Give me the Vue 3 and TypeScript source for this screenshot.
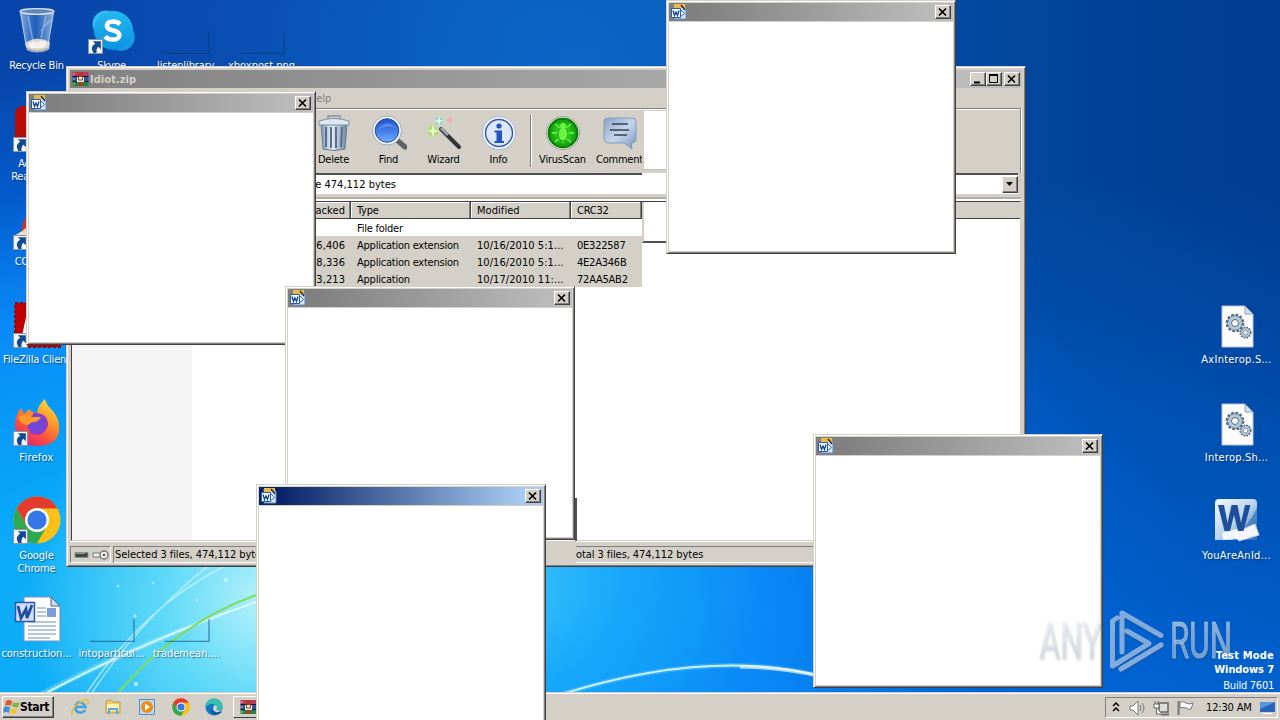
<script setup lang="ts">
interface Popup { x: number; y: number; active?: boolean }
interface Shortcut { label: string[]; icon: string; x: number; y: number; link?: boolean; track?: number }

const popups: Popup[] = [
  { x: 26, y: 91 },
  { x: 666, y: 0 },
  { x: 285, y: 286 },
  { x: 813, y: 434 },
  { x: 256, y: 484, active: true },
]

const shortcuts: Shortcut[] = [
  { label: ['Recycle Bin'], icon: 'bin', x: -1, y: 6 },
  { label: ['Skype'], icon: 'skype', x: 74, y: 6, link: true },
  { label: ['listenlibrary.'], icon: 'ghost', x: 149, y: 6, track: -0.1 },
  { label: ['xboxpost.png'], icon: 'ghost', x: 224, y: 6, track: 0 },
  { label: ['Acrobat', 'Reader DC'], icon: 'acrobat', x: -1, y: 104, link: true },
  { label: ['CCleaner'], icon: 'cc', x: -1, y: 202, link: true },
  { label: ['FileZilla Client'], icon: 'filezilla', x: -1, y: 300, link: true, track: -0.15 },
  { label: ['Firefox'], icon: 'firefox', x: -1, y: 398, link: true, track: 0.25 },
  { label: ['Google', 'Chrome'], icon: 'chrome', x: -1, y: 496, link: true, track: -0.1 },
  { label: ['construction...'], icon: 'doc', x: -1, y: 594, track: -0.05 },
  { label: ['intoparticul...'], icon: 'ghost', x: 74, y: 594, track: 0 },
  { label: ['trademean....'], icon: 'ghost', x: 149, y: 594, track: 0 },
  { label: ['AxInterop.S...'], icon: 'dll', x: 1199, y: 300, track: 0.25 },
  { label: ['Interop.Sh...'], icon: 'dll', x: 1199, y: 398, track: 0.22 },
  { label: ['YouAreAnId...'], icon: 'word', x: 1199, y: 496, track: 0.28 },
]

const tools = [
  { name: 'Delete', icon: 'trash' },
  { name: 'Find', icon: 'find' },
  { name: 'Wizard', icon: 'wizard' },
  { name: 'Info', icon: 'info' },
]
const tools2 = [
  { name: 'VirusScan', icon: 'virus' },
  { name: 'Comment', icon: 'comment' },
]
const columns = ['Name', 'Size', 'Packed', 'Type', 'Modified', 'CRC32']
const rows = [
  ['', '', '', 'File folder', '', ''],
  ['', '', '46,406', 'Application extension', '10/16/2010 5:1...', '0E322587'],
  ['', '', '18,336', 'Application extension', '10/16/2010 5:1...', '4E2A346B'],
  ['', '', '23,213', 'Application', '10/17/2010 11:...', '72AA5AB2'],
]
const quick = ['ie', 'folder', 'media', 'chrome', 'edge']
</script>

<template>
  <svg class="defs" width="0" height="0">
    <defs>
      <linearGradient id="gGlass" x1="0" x2="1"><stop offset="0" stop-color="#b9d3ee" stop-opacity=".75" /><stop offset=".45" stop-color="#3f7fd0" stop-opacity=".45" /><stop offset="1" stop-color="#cfe0f2" stop-opacity=".7" /></linearGradient>
      <linearGradient id="gSkype" x1="0" y1="0" x2="0" y2="1"><stop offset="0" stop-color="#25b8ee" /><stop offset="1" stop-color="#0a93e2" /></linearGradient>
      <linearGradient id="gFox" x1=".9" y1="0" x2=".3" y2="1"><stop offset="0" stop-color="#ffe84a" /><stop offset=".4" stop-color="#ff9a28" /><stop offset=".75" stop-color="#fb4a43" /><stop offset="1" stop-color="#e02478" /></linearGradient>
      <linearGradient id="gMetal" x1="0" x2="1"><stop offset="0" stop-color="#7d93ab" /><stop offset=".4" stop-color="#e8f0f7" /><stop offset="1" stop-color="#6f849c" /></linearGradient>
      <linearGradient id="gBlue" x1="0" y1="0" x2="0" y2="1"><stop offset="0" stop-color="#2352cc" /><stop offset=".5" stop-color="#3f7bea" /><stop offset="1" stop-color="#6fb0ff" /></linearGradient>
      <linearGradient id="gNote" x1="0" y1="0" x2="1" y2="1"><stop offset="0" stop-color="#8ba3c6" /><stop offset=".5" stop-color="#c5d6ec" /><stop offset="1" stop-color="#7993bd" /></linearGradient>
      <linearGradient id="gWord" x1="0" y1="0" x2="1" y2="1"><stop offset="0" stop-color="#f5f9ff" /><stop offset=".5" stop-color="#bdd5ee" /><stop offset="1" stop-color="#3979bd" /></linearGradient>
      <radialGradient id="gVirus"><stop offset="0" stop-color="#4cf02e" /><stop offset="1" stop-color="#0b930c" /></radialGradient>
      <linearGradient id="gMark" x1="0" y1="0" x2="0" y2="1"><stop offset="0" stop-color="#fff" stop-opacity=".6" /><stop offset=".4" stop-color="#e8edf5" stop-opacity=".52" /><stop offset="1" stop-color="#b9c0cd" stop-opacity=".55" /></linearGradient>
    </defs>

    <symbol id="bin" viewBox="0 0 48 48">
      <path d="M7 5l6 37q11 6 22-1l6-36z" fill="url(#gGlass)" />
      <path d="M12 37q12-8 25-1l-1 7q-11 6-22 0z" fill="#d9d5d1" />
      <path d="M15 39q5-6 9-2 5-5 10 0l-3 5H18z" fill="#f5f2ee" />
      <path d="M15 10l5 25M33 10l-5 22M28 25l9-11" stroke="#d2e4fa" stroke-opacity=".45" stroke-width="1.500" fill="none" />
      <ellipse cx="24" cy="5.500" rx="17" ry="2.800" fill="#6f90b8" fill-opacity=".8" stroke="#dfe6ec" stroke-width="1.300" />
      <path d="M7.500 7l6 34M40.500 7l-6 35" stroke="#d5e4f5" fill="none" stroke-opacity=".7" />
      <path d="M14 43q10 5 21 0" stroke="#a9aeb3" stroke-width="2" fill="none" />
    </symbol>
    <symbol id="skype" viewBox="0 0 48 48">
      <circle cx="18" cy="18" r="13.500" fill="#2fbdf0" /><circle cx="33" cy="31" r="13.800" fill="#159ce5" /><circle cx="25.500" cy="24.500" r="19.500" fill="url(#gSkype)" />
      <path d="M32 18.200q-3-2.700-7-2.700c-8 0-8 7.300-.5 8.700 9.500 1.700 8.500 9.300.5 9.300-4 0-6.500-1.300-8-3" fill="none" stroke="#fff" stroke-width="4.600" />
    </symbol>
    <symbol id="ghost" viewBox="0 0 48 48"><path d="M2 47.500h44V25" fill="none" stroke="#063c7a" stroke-opacity=".55" stroke-width="1.300" /></symbol>
    <symbol id="acrobat" viewBox="0 0 48 48"><rect x="2" y="2" width="46" height="46" rx="8" fill="#b80d05" /><path d="M10 37q17-9 14-24M24 15q3 16 16 15M10 37q12-10 30-7" fill="none" stroke="#fff" stroke-width="3" /></symbol>
    <symbol id="cc" viewBox="0 0 48 48"><path d="M9 35Q7 13 24 7l20 35H20z" fill="#d4342c" /><path d="M1 34Q10 29 17 23l24 19H4z" fill="#f3dfc2" /></symbol>
    <symbol id="filezilla" viewBox="0 0 48 48"><rect x="2" y="3" width="46" height="44" fill="#bf0000" stroke="#8c0c12" stroke-width="2" stroke-dasharray="3 2" /><path d="M15 8h28l-2 6H23l-2 9h14l-2 6H19l-5 16H7z" fill="#fff" /></symbol>
    <symbol id="firefox" viewBox="0 0 48 48">
      <path d="M2 28Q2 17 8 10l3 6 5-5q3 4 8 4 1-8 8-14 1 6 8 12 6 8 6 15 2 19-22 20Q4 48 2 28z" fill="url(#gFox)" />
      <circle cx="24" cy="26" r="10" fill="#7446d5" /><path d="M5 19q8-5 14 0h9q-3 6-9 5l-4 3Q8 27 5 19z" fill="#ff9a28" /><path d="M20 16q14-1 14 11-4 13-17 7" fill="none" stroke="#9a35c8" stroke-width="2" />
    </symbol>
    <symbol id="chrome" viewBox="0 0 48 48">
      <circle cx="24" cy="24" r="23.500" fill="#fbc116" />
      <path d="M3.700 12.300A23.500 23.500 0 0 0 24 47.500L34 30 24 24 14 30z" fill="#2da94f" />
      <path d="M3.700 12.300A23.500 23.500 0 0 1 44.500 12.500H24L14 30z" fill="#e33b2e" />
      <circle cx="24" cy="24" r="12" fill="#fff" /><circle cx="24" cy="24" r="9.600" fill="#3478e8" />
    </symbol>
    <symbol id="doc" viewBox="0 0 48 48">
      <path d="M11 3h27l9 9v35H11z" fill="#fdfeff" stroke="#7891b5" /><path d="M38 3v9h9z" fill="#cfdcef" stroke="#47628c" />
      <path d="M24 14h9M24 18h9M24 22h9M15 28h28M15 32h28M15 36h28M15 40h28M15 44h22" stroke="#6f91c6" stroke-width="1.200" /><rect x="34" y="14" width="9" height="9" fill="#7ca0d6" />
      <rect x="2.500" y="8.500" width="19" height="19" fill="#cfe0f7" stroke="#3257a5" stroke-width="1.500" /><path d="M5 12l3 12 5-9 1 9 5-13" fill="none" stroke="#214d9f" stroke-width="2.800" />
    </symbol>
    <symbol id="gear" viewBox="0 0 24 24">
      <circle cx="12" cy="12" r="9.500" fill="none" stroke="#4e6375" stroke-width="3.400" stroke-dasharray="3 2" />
      <circle cx="12" cy="12" r="6.800" fill="none" stroke="#b4c8da" stroke-width="4.500" /><circle cx="12" cy="12" r="4.200" fill="#fff" stroke="#4d6579" stroke-width="1.200" /><circle cx="12" cy="12" r="8.800" fill="none" stroke="#5d7488" />
    </symbol>
    <symbol id="dll" viewBox="0 0 48 48">
      <path d="M9 6h23l8 8v33H9z" fill="#fcfcfc" stroke="#b8c3cf" /><path d="M32 6v8h8z" fill="#d6e0eb" stroke="#93a4b5" />
      <use href="#gear" x="12" y="13" width="20" height="20" /><use href="#gear" x="26" y="26" width="13" height="13" />
    </symbol>
    <symbol id="word" viewBox="0 0 48 48">
      <path d="M2 7q0-4 4-4h34q4 0 4 4v37H2z" fill="url(#gWord)" /><path d="M20 42q14-10 24-30v32H20z" fill="#2e6db5" fill-opacity=".65" />
      <path d="M20 37l22-9 4 11-20 6z" fill="#f5f6fb" stroke="#c3c9d9" /><path d="M9 37l18-5-2 11-15 1z" fill="#fff" fill-opacity=".85" />
      <path d="M5 9h6l3.500 18L18.500 9h6l3.500 18L32 9h5.500l-7 26h-5.500l-4-16-4 16h-5.500z" fill="#1d4f9c" />
    </symbol>
    <symbol id="link" viewBox="0 0 14 14"><path d="M.5.500h13v13H.5z" fill="#f4f8fc" stroke="#8d959d" /><path d="M12 2v7.500L9.700 7.300Q7.500 9 8 13H5Q1.500 8 6.700 4.300L4.500 2z" fill="#124a90" /></symbol>

    <symbol id="trash" viewBox="0 0 36 36"><path d="M5 9h26l-2 25q-11 3-22 0z" fill="url(#gMetal)" stroke="#647b94" /><path d="M10 12v20M15 12v21M20 12v21M26 12l-1 20" stroke="#56708f" stroke-width="2" /><path d="M3 6q15-5 30 0v4H3z" fill="#dfe7ef" stroke="#798da4" /><path d="M12 4V1h12v3" fill="none" stroke="#8193a7" stroke-width="1.500" /></symbol>
    <symbol id="find" viewBox="0 0 36 36"><path d="M26 25l8 7" stroke="#5c6269" stroke-width="5" stroke-linecap="round" /><circle cx="16" cy="15.500" r="14.500" fill="#f4f7fb" stroke="#9eaab8" /><circle cx="16" cy="15.500" r="11.800" fill="url(#gBlue)" stroke="#24459e" /><path d="M7 14q9-11 18-1-9-3-18 1" fill="#92b7ff" fill-opacity=".4" /></symbol>
    <symbol id="wizard" viewBox="0 0 36 36"><path d="M15 14l18 18" stroke="#30343a" stroke-width="4" stroke-linecap="round" /><path d="M15 13l7 7" stroke="#9ba1a8" stroke-width="3" /><circle cx="13" cy="6" r="4" fill="#61dcea" fill-opacity=".65" /><circle cx="7" cy="16" r="5.500" fill="#9be552" fill-opacity=".65" /><path d="M13 1l1 4 4 1-4 1-1 4-1-4-4-1 4-1zM7 10l1.500 5 5 1-5 1L7 22l-1.500-5-5-1 5-1z" fill="#eeffcb" /><circle cx="24" cy="5" r="2.500" fill="#ffa0a8" fill-opacity=".7" /></symbol>
    <symbol id="info" viewBox="0 0 36 36"><circle cx="18" cy="18" r="16.500" fill="#f4f7fc" stroke="#b0b9ca" /><circle cx="18" cy="18" r="13.500" fill="#dde8fb" stroke="#3658b5" stroke-width="1.500" /><circle cx="18" cy="11" r="2.600" fill="#2454bf" /><path d="M13.500 15.500H21V26h2v2H13.500v-2h2v-8.500h-2z" fill="#2454bf" /></symbol>
    <symbol id="virus" viewBox="0 0 36 36"><circle cx="18" cy="18" r="16.500" fill="#eef4eb" stroke="#8da587" /><circle cx="18" cy="18" r="14.600" fill="url(#gVirus)" stroke="#087009" stroke-width="1.500" /><path d="M10 9l5 4M26 9l-5 4M7 18h7M29 18h-7M10 27l5-4M26 27l-5-4M18 8v20" stroke="#5fe83c" stroke-width="1.800" /><ellipse cx="18" cy="19" rx="5" ry="7" fill="#6bf442" stroke="#0c9c0e" /><circle cx="18" cy="11" r="3" fill="#6bf442" /></symbol>
    <symbol id="comment" viewBox="0 0 36 36"><path d="M6 3h24q4 0 4 4v17q0 4-4 4h-1l1 6-8-6H7q-5 0-5-5V7q0-4 4-4z" fill="url(#gNote)" stroke="#819abb" /><path d="M10 9h16M8 15h19M12 20h13" stroke="#36404e" stroke-width="1.600" /></symbol>
    <symbol id="rar" viewBox="0 0 16 16"><path d="M0 1h16v5H0z" fill="#b63863" /><path d="M0 6h16v4H0z" fill="#314fa5" /><path d="M0 10h16v5H0z" fill="#218446" /><path d="M0 5.500h16M0 10.500h16" stroke="#161a22" /><path d="M6 1h4v14H6z" fill="#ae3b21" /><path d="M4.500 6h7v5h-7z" fill="#ece9df" /><path d="M6 6v3h4V6" fill="none" stroke="#7c4c2d" /><path d="M1.500 2v2M1.500 7v2M1.500 12v2" stroke="#e3ca7d" /></symbol>
    <symbol id="wicon" viewBox="0 0 16 16"><path d="M3 1h10l2 3v11H3z" fill="#d7e6fb" stroke="#6383b7" /><path d="M3 0h11v4H3z" fill="#e8bc4b" /><path d="M10 1l4 5" stroke="#202b3e" stroke-width="1.500" /><path d="M9 5l4.500 4.500L9 13z" fill="#fff" stroke="#2861bb" /><path d="M.5 4.500h9v9h-9z" fill="#fff" stroke="#255bb3" /><path d="M2 6.500l1.500 5L5 8l1.500 3.500L8 6.500" fill="none" stroke="#174c9d" stroke-width="1.400" /></symbol>

    <symbol id="ie" viewBox="0 0 18 18"><path d="M14.500 12Q11 16 6.500 14 2 10 6 5.500q5-3.500 8.500 3.500H5" fill="none" stroke="#3ba5e0" stroke-width="2.500" /><path d="M2 16Q-2 14 7 6q9-7 10-3 1 2-1 4" fill="none" stroke="#e9b92f" stroke-width="1.500" /></symbol>
    <symbol id="folder" viewBox="0 0 18 18"><path d="M2 3l5-1 2 2h7v11H2z" fill="#edc969" stroke="#bf9d42" /><path d="M3 6h12v7H3z" fill="#fff0b4" /><path d="M5 16v-5h8v5" fill="none" stroke="#58abe0" stroke-width="2" /></symbol>
    <symbol id="media" viewBox="0 0 18 18"><path d="M1.500 1.500h15v15h-15z" fill="#b8daf4" stroke="#4b91ca" /><circle cx="9" cy="9" r="6" fill="#f28b16" /><path d="M7 5.500l5 3.500-5 3.500z" fill="#fff" /></symbol>
    <symbol id="edge" viewBox="0 0 18 18"><circle cx="9" cy="9" r="8.500" fill="#0f76c4" /><path d="M1 9Q1 1 9 .5q9 1 8.500 8-1 4-5 3.500-3-1-1-4-5-5-10.500 1z" fill="#35c1b1" /><path d="M8 8q-3 3 1 6 4 2 7-1l1 1q-3 3-7 3-7-3-2-9z" fill="#0c529f" /><path d="M9 7q5 1 2 4 3 3 6 0l-1 2q-6 3-8-2z" fill="#d8d4cd" /></symbol>
    <symbol id="flagwin" viewBox="0 0 18 18"><path d="M3 3q3-2 6 0L8 8Q5 6 2 8z" fill="#e3552a" /><path d="M10 4q3 2 7 0l-2 5q-3 1-6-1z" fill="#7fb93b" /><path d="M1 9q3-1 6 0l-1 6q-3-2-6 0z" fill="#3e8fdb" /><path d="M8 10q3 2 6 0l-1 5q-3 2-6 0z" fill="#f6c231" /></symbol>
  </svg>

  <main class="screen">
    <svg class="streaks" width="1280" height="720" fill="none">
      <path d="M42 694Q145 640 262 600" stroke="#9beafb" stroke-width="6" stroke-opacity=".35" />
      <path d="M44 694Q145 640 262 600" stroke="#e3fbff" stroke-width="2.200" stroke-opacity=".85" />
      <path d="M86 694Q145 605 225 566M91 694Q140 620 208 566" stroke="#d7f8ff" stroke-width="1.500" stroke-opacity=".65" />
      <path d="M117 694Q180 620 262 593" stroke="#7ddc63" stroke-width="2.200" />
      <path d="M562 694Q710 648 820 676" stroke="#76d0ff" stroke-width="5" stroke-opacity=".35" />
      <path d="M562 694Q710 648 820 676" stroke="#c9f1ff" stroke-width="2" />
      <path d="M740 667Q780 667 820 676" stroke="#fff" stroke-width="3.500" stroke-opacity=".6" />
      <g fill="#dcfaff" fill-opacity=".75"><circle cx="135" cy="616" r="1.500" /><circle cx="226" cy="580" r="2" /><circle cx="153" cy="583" r="1" /><circle cx="136" cy="684" r="2" /><circle cx="118" cy="586" r="1.200" /><circle cx="197" cy="600" r="1.200" /></g>
    </svg>

    <div v-for="s in shortcuts" :key="s.label[0]" class="shortcut" :style="{ left: s.x + 'px', top: s.y + 'px', letterSpacing: (s.track ?? -0.23) + 'px' }">
      <span class="pic">
        <svg width="48" height="48"><use :href="'#' + s.icon" /></svg>
        <svg v-if="s.link" class="arrow" width="15" height="15"><use href="#link" /></svg>
      </span>
      <span v-for="l in s.label" :key="l" class="caption">{{ l }}</span>
    </div>

    <section class="archive">
      <header class="title">
        <svg width="17" height="16"><use href="#rar" /></svg><b>Idiot.zip</b>
        <span class="btn"><svg width="12" height="10"><path d="M2 8.500h6" stroke="#000" stroke-width="2" /></svg></span>
        <span class="btn"><svg width="12" height="10"><path d="M1.500 .5h8v8h-8zM1.500 1.500h8" fill="none" stroke="#000" /></svg></span>
        <span class="btn last"><svg width="12" height="10"><path d="M2 1.500l7 7M9 1.500l-7 7" stroke="#000" stroke-width="1.700" /></svg></span>
      </header>
      <nav class="menu">Help</nav>
      <div class="toolbar">
        <div v-for="t in tools" :key="t.name" class="tool"><svg width="36" height="36"><use :href="'#' + t.icon" /></svg><span>{{ t.name }}</span></div>
        <i class="sep"></i>
        <div v-for="t in tools2" :key="t.name" class="tool wide"><svg width="36" height="36"><use :href="'#' + t.icon" /></svg><span>{{ t.name }}</span></div>
      </div>
      <div class="address"><span class="path">size 474,112 bytes</span><span class="btn drop"><svg width="8" height="5"><path d="M0 0h7L3.500 4z" /></svg></span></div>
      <div class="list">
        <div class="row head"><span v-for="c in columns" :key="c">{{ c }}</span></div>
        <div v-for="(r, i) in rows" :key="i" class="row" :class="{ picked: i > 0 }"><span v-for="(c, j) in r" :key="j">{{ c }}</span></div>
        <div class="rest"></div>
      </div>
      <footer class="status">
        <span class="cell lamps"><svg width="36" height="12"><path d="M2 3.500h13v5H2z" fill="#3f4646" stroke="#8c918c" /><path d="M3 4.500h9" stroke="#8d9b95" /><path d="M20 4h8v4h-8z" fill="#f0f0ec" stroke="#777" /><circle cx="31" cy="6" r="4" fill="#f3f3ef" stroke="#777" stroke-width="1.500" /><circle cx="31" cy="6" r="1.300" fill="#555" /></svg></span>
        <span class="cell sel">Selected 3 files, 474,112 bytes</span>
        <span class="cell total">otal 3 files, 474,112 bytes</span>
      </footer>
    </section>
    <div class="trail upper"></div>
    <div class="trail gap"></div>
    <div class="trail lower"></div>
    <div class="trail side"></div>

    <footer class="taskbar">
      <div class="start"><svg width="18" height="18"><use href="#flagwin" /></svg><b>Start</b></div>
      <div class="quick"><svg v-for="q in quick" :key="q" width="18" height="18"><use :href="'#' + q" /></svg></div>
      <div class="task"><svg width="17" height="16"><use href="#rar" /></svg></div>
      <div class="tray">
        <svg width="82" height="18" fill="none">
          <path d="M1 7l3-3 3 3M1 12l3-3 3 3" stroke="#000" stroke-width="1.500" />
          <path d="M18 7h3l5-5v14l-5-5h-3z" fill="#fff" stroke="#777" /><path d="M28 6q2 3 0 6M30 4q4 5 0 10" stroke="#777" />
          <path d="M47 4h9v9h-9z" fill="#dcdcd8" stroke="#666" stroke-width="1.500" /><path d="M49 15.500h8" stroke="#777" stroke-width="2" /><path d="M42 5h5v4h-5zM43 2v3M46 2v3M44.500 9v6H49" fill="#fff" stroke="#666" />
          <path d="M66.500 2v14" stroke="#777" stroke-width="2" /><path d="M68 3q4-1 6 1 3 2 7 0l-2 6q-3 1-5-1-3-1-6 0z" fill="#fff" stroke="#777" />
        </svg>
        <time>12:30 AM</time>
        <svg width="16" height="14"><path d="M0 1h15v10H0z" fill="#2b63b8" /><path d="M0 1h15L0 8z" fill="#5a94dc" /><path d="M3 12.500h9" stroke="#fff" /></svg>
      </div>
    </footer>

    <section v-for="p in popups" :key="p.x" class="popup" :class="{ active: p.active }" :style="{ left: p.x + 'px', top: p.y + 'px' }">
      <header><svg width="16" height="16"><use href="#wicon" /></svg><span class="btn"><svg width="12" height="10"><path d="M2 1.500l7 7M9 1.500l-7 7" stroke="#000" stroke-width="1.700" /></svg></span></header>
      <div class="blank"></div>
    </section>

    <svg class="mark" width="250" height="100">
      <g fill="url(#gMark)" stroke="#dfe6f0" stroke-opacity=".4"><text x="10" y="58" textLength="62" lengthAdjust="spacingAndGlyphs">ANY</text><text x="141" y="58" textLength="62" lengthAdjust="spacingAndGlyphs">RUN</text></g>
      <path d="M88 18L83.500 21V66L120 43.500 98 31M93 52V13L132 35.500 M92 69L132 45" fill="none" stroke="#e6edf6" stroke-opacity=".55" stroke-width="5" stroke-linecap="round" stroke-linejoin="round" />
    </svg>
    <div class="build"><b>Test Mode</b><b>Windows 7</b><span>Build 7601</span></div>
  </main>
</template>

<style>
html, body { margin: 0; overflow: hidden; }
</style>

<style scoped>
* { box-sizing: border-box; }
.defs { position: absolute; }
.screen {
  position: relative; width: 1280px; height: 720px; overflow: hidden;
  font: 11px/13px "DejaVu Sans Condensed", "DejaVu Sans", sans-serif; font-stretch: condensed; letter-spacing: -0.23px; color: #000; cursor: default;
  background:
    radial-gradient(ellipse 230px 250px at 260px 600px, #b4f1fa 0, rgba(110, 224, 248, .85) 40%, rgba(30, 190, 248, 0) 100%),
    radial-gradient(ellipse 260px 220px at 500px 580px, rgba(70, 206, 252, .8) 0, rgba(40, 180, 252, .45) 50%, rgba(30, 160, 250, 0) 100%),
    radial-gradient(ellipse 1000px 560px at 200px 620px, #1cbcf8 0, #08a6f8 28%, #0a8af8 56%, rgba(0, 102, 220, .65) 78%, rgba(0, 90, 200, 0) 100%),
    radial-gradient(ellipse 380px 300px at 580px 60px, rgba(12, 106, 200, .85) 0, rgba(14, 111, 204, 0) 100%),
    linear-gradient(0deg, rgba(0, 112, 232, .75) 0, rgba(0, 90, 200, 0) 75%),
    linear-gradient(90deg, #0845aa 0, #0a55b6 40%, #0049a0 75%, #003c90 100%);
}
.screen svg { display: block; flex: none; }
.streaks { position: absolute; inset: 0; }
.shortcut { position: absolute; width: 75px; display: flex; flex-direction: column; align-items: center; color: #fff; }
.shortcut .pic { position: relative; margin-bottom: 5px; }
.shortcut .arrow { position: absolute; left: 0; bottom: 0; }
.caption { white-space: nowrap; text-shadow: 1px 1px 1px rgba(0, 30, 80, .6); }

.btn { width: 16px; height: 14px; display: flex; align-items: center; justify-content: center; background: #d4d0c8; border: 1px solid; border-color: #fff #404040 #404040 #fff; box-shadow: inset -1px -1px #808080; }

.archive { position: absolute; left: 66px; top: 66px; width: 960px; height: 501px; padding: 3px; display: flex; flex-direction: column; background: #d4d0c8; border: 1px solid; border-color: #d4d0c8 #404040 #404040 #d4d0c8; box-shadow: inset 1px 1px #fff, inset -1px -1px #808080; }
.title { height: 18px; flex: none; display: flex; align-items: center; padding: 0 2px; background: linear-gradient(90deg, #808080, #c0c0c0); color: #d4d0c8; }
.title b { flex: 1; margin-left: 1px; letter-spacing: .05px; }
.title .last { margin-left: 2px; }
.menu { height: 20px; flex: none; padding: 4px 0 0 239px; color: #808080; letter-spacing: -.1px; }
.toolbar { height: 65px; flex: none; margin-right: 1px; border: 1px solid #808080; border-left: 0; border-bottom: 0; box-shadow: inset 0 1px #fff, 1px 0 #fff; display: flex; padding: 6px 0 0 236px; }
.tool { width: 55px; display: flex; flex-direction: column; align-items: center; }
.tool span { margin-top: 2px; }
.tool.wide { width: 57px; }
.sep { width: 2px; height: 52px; margin: 0 2px 0 4px; background: #808080; border-right: 1px solid #fff; }
.address { height: 21px; flex: none; margin: 0 4px 0 1px; display: flex; justify-content: space-between; align-items: center; background: #fff; border-top: 2px solid #505050; }
.path { padding-left: 231px; letter-spacing: .02px; }
.drop { height: 17px; }
.list { position: relative; flex: 1; min-height: 0; margin: 7px 1px 0 1px; border: 1px solid #404040; border-right-color: #d4d0c8; border-bottom-color: #d4d0c8; box-shadow: 0 -2px #fff, 0 -4px #b4b0a8; background: #fff; display: flex; flex-direction: column; }
.row { flex: none; width: 570px; height: 17px; display: grid; grid-template-columns: 120px 80px 79px 120px 100px 71px; line-height: 19px; }
.row span { padding: 0 6px; white-space: nowrap; overflow: hidden; }
.row span:nth-child(2), .row span:nth-child(3) { text-align: right; }
.row span:nth-child(3), .row span:nth-child(5) { letter-spacing: .06px; }
.row.head { width: auto; height: 17px; background: #d4d0c8; border-bottom: 1px solid #404040; }
.row.head span { border-right: 1px solid #404040; box-shadow: inset -1px 0 #808080, inset 1px 1px #fff; padding: 0 5px 0 6px; line-height: 18px; }
.picked { background: #d4d0c8; }
.rest { flex: 1; width: 120px; background: #f5f5f5; }
.status { height: 22px; flex: none; display: flex; gap: 2px; padding-top: 4px; border-top: 1px solid #fff; }
.cell { border: 1px solid #808080; border-right-color: #fff; border-bottom-color: #fff; line-height: 16px; padding-left: 2px; white-space: nowrap; letter-spacing: -.07px; }
.lamps { width: 41px; display: flex; align-items: center; }
.sel { width: 462px; border-right: 0; padding-left: 1px; }
.total { flex: 1; border-left: 0; padding-left: 1px; margin-left: -2px; }
.trail { position: absolute; background: #fff; }
.upper { left: 642px; top: 111px; width: 24px; height: 59px; border-left: 2px solid #d4d0c8; border-bottom: 1px solid #c6c2ba; }
.gap { left: 642px; top: 173px; width: 24px; height: 21px; }
.lower { left: 642px; top: 202px; width: 24px; height: 41px; border-left: 2px solid #d4d0c8; border-bottom: 2px solid #505050; }
.side { left: 546px; top: 498px; width: 31px; height: 43px; border-right: 2px solid #505050; background: #fff; }
.side::after { content: ""; position: absolute; left: 0; top: 43px; width: 30px; height: 22px; background: #d4d0c8; }

.taskbar { position: absolute; left: 0; right: 0; bottom: 0; height: 28px; display: flex; background: #d4d0c8; border-top: 1px solid #d4d0c8; box-shadow: inset 0 1px #fff; padding: 3px 2px 2px; }
.start { width: 52px; height: 22px; display: flex; align-items: center; border: 1px solid; border-color: #fff #404040 #404040 #fff; box-shadow: inset -1px -1px #808080; }
.start b { font-size: 12px; margin-left: -1px; letter-spacing: -.35px; }
.quick { display: flex; gap: 15.700px; align-items: center; margin-left: 16.500px; width: 162.500px; height: 22px; flex: none; }
.task { flex: none; width: 160px; height: 22px; display: flex; align-items: center; padding-left: 6px; border: 1px solid; border-color: #fff #404040 #404040 #fff; }
.tray { width: 173px; height: 21px; margin: 1px 0 0 auto; display: flex; align-items: center; padding-left: 6px; border: 1px solid #808080; border-right-color: #fff; border-bottom-color: #fff; }
.tray time { margin-left: 12px; width: 54px; white-space: nowrap; letter-spacing: -.15px; }

.popup { position: absolute; width: 290px; height: 254px; padding: 2px; display: flex; flex-direction: column; background: #d4d0c8; border: 1px solid; border-color: #d4d0c8 #404040 #404040 #d4d0c8; box-shadow: inset 1px 1px #fff, inset -1px -1px #808080; }
.popup header { height: 18px; margin-bottom: 1px; flex: none; display: flex; align-items: center; justify-content: space-between; padding: 0 2px; background: linear-gradient(90deg, #808080 10%, #c0c0c0); }
.popup.active header { background: linear-gradient(90deg, #0a246a 8%, #a6caf0 92%); }
.blank { flex: 1; background: #fff; }

.mark { position: absolute; left: 1029px; top: 600px; filter: drop-shadow(1px 2px 1px rgba(60, 65, 80, .35)); }
.mark text { font: 50px Roboto, "Open Sans", sans-serif; letter-spacing: 0; }
.build { position: absolute; right: 6px; top: 649px; display: flex; flex-direction: column; align-items: flex-end; color: #fff; letter-spacing: -.1px; }
.build b { height: 14px; }
.build b:first-child { letter-spacing: .2px; }
.build span { margin-top: 2px; letter-spacing: -.25px; }
</style>
